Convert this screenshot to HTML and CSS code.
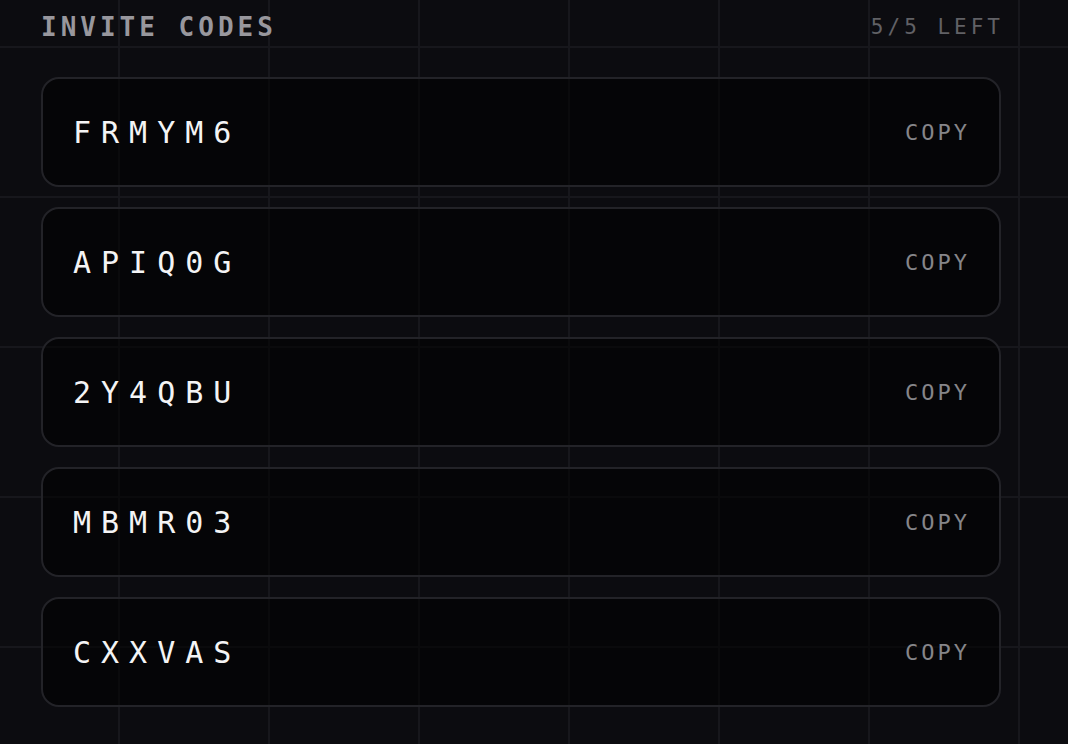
FILE: index.html
```html
<!DOCTYPE html>
<html lang="en">
<head>
    <meta charset="UTF-8">
    <meta name="viewport" content="width=device-width, initial-scale=1.0">
    <title>Invite Codes</title>
    <link rel="stylesheet" href="styles.css">
</head>
<body>
    <div class="invites">
        <div class="invites-head">
            <h2 class="invites-title">INVITE CODES</h2>
            <span class="invites-left">5/5 LEFT</span>
        </div>
        <ul class="code-list">
            <li class="code-card">
                <span class="code">FRMYM6</span>
                <button class="copy-btn">COPY</button>
            </li>
            <li class="code-card">
                <span class="code">APIQ0G</span>
                <button class="copy-btn">COPY</button>
            </li>
            <li class="code-card">
                <span class="code">2Y4QBU</span>
                <button class="copy-btn">COPY</button>
            </li>
            <li class="code-card">
                <span class="code">MBMR03</span>
                <button class="copy-btn">COPY</button>
            </li>
            <li class="code-card">
                <span class="code">CXXVAS</span>
                <button class="copy-btn">COPY</button>
            </li>
        </ul>
    </div>
</body>
</html>
```

FILE: styles.css
```css
html, body {
    margin: 0;
    height: 100%;
}

body {
    background-color: #0c0c10;
    /* faint 150px grid behind everything */
    background-image:
        linear-gradient(to right, #17171c 0, #17171c 2px, transparent 2px),
        linear-gradient(to bottom, #17171c 0, #17171c 2px, transparent 2px);
    background-size: 150px 150px;
    background-position: 118px 46px;
    font-family: "DejaVu Sans Mono", monospace;
}

.invites {
    width: 960px;
    padding: 7px 0 0 41px;
}

.invites-head {
    display: flex;
    justify-content: space-between;
    align-items: center;
    height: 40px;
    margin-bottom: 30px;
}

.invites-title {
    margin: 0;
    font-size: 26px;
    font-weight: bold;
    letter-spacing: 4px;
    color: #98979d;
}

.invites-left {
    font-size: 21px;
    letter-spacing: 4px;
    margin-right: -3px;
    color: #616166;
}

.code-list {
    list-style: none;
    margin: 0;
    padding: 0;
    display: flex;
    flex-direction: column;
    gap: 20px;
}

.code-card {
    display: flex;
    justify-content: space-between;
    align-items: center;
    height: 106px;
    padding: 0 32px 0 30px;
    border: 2px solid #232328;
    border-radius: 18px;
    background-color: rgba(0, 0, 0, 0.55);
}

.code {
    font-size: 30px;
    letter-spacing: 10px;
    color: #f4f4f5;
}

.copy-btn {
    background: none;
    border: none;
    padding: 0;
    font-family: "DejaVu Sans Mono", monospace;
    font-size: 22px;
    letter-spacing: 3px;
    margin-right: -3px;
    color: #86868a;
    cursor: pointer;
}

.copy-btn:hover {
    color: #ffffff;
}
```
